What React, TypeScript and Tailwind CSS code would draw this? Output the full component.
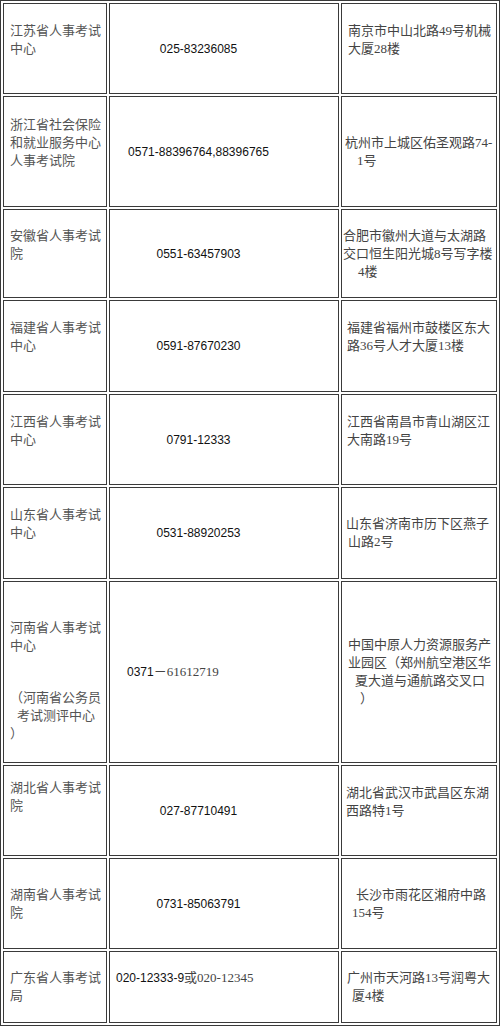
import type { ReactNode } from "react";

type Line = [string, string?];

interface Row {
    h: string;
    org: ReactNode;
    orgPad?: string;
    tel: ReactNode;
    telPad?: string;
    telAlign?: string;
    addr: Line[];
    addrPad?: string;
    addrIndent?: string;
}

const serif = "font-['Liberation_Serif','Noto_Sans_CJK_SC',serif]";
const sans = "font-['Liberation_Sans','Noto_Sans_CJK_SC',sans-serif]";

const OrgLines = ({ lines }: { lines: string[] }) => (
    <>
        {lines.map((l) => (
            <div key={l} className="whitespace-nowrap">{l}</div>
        ))}
    </>
);

const rows: Row[] = [
    {
        h: "h-[91px]",
        org: <OrgLines lines={["江苏省人事考试", "中心"]} />,
        orgPad: "pb-[18px]",
        tel: "025-83236085",
        addr: [["南京市中山北路49号机械"], ["大厦28楼"]],
        addrPad: "pb-[18px]",
        addrIndent: "pl-[6px]",
    },
    {
        h: "h-[111px]",
        org: <OrgLines lines={["浙江省社会保险", "和就业服务中心", "人事考试院"]} />,
        orgPad: "pb-[18px]",
        tel: "0571-88396764,88396765",
        addr: [["杭州市上城区佑圣观路74-"], ["1号", "pl-[12px]"]],
        addrIndent: "pl-[3px]",
    },
    {
        h: "h-[89px]",
        org: <OrgLines lines={["安徽省人事考试", "院"]} />,
        orgPad: "pb-[18px]",
        tel: "0551-63457903",
        addr: [["合肥市徽州大道与太湖路"], ["交口恒生阳光城8号写字楼"], ["4楼", "pl-[15px]"]],
        addrIndent: "pl-[1px]",
    },
    {
        h: "h-[92px]",
        org: <OrgLines lines={["福建省人事考试", "中心"]} />,
        orgPad: "pb-[18px]",
        tel: "0591-87670230",
        addr: [["福建省福州市鼓楼区东大"], ["路36号人才大厦13楼"]],
        addrPad: "pb-[18px]",
        addrIndent: "pl-[5px]",
    },
    {
        h: "h-[91px]",
        org: <OrgLines lines={["江西省人事考试", "中心"]} />,
        orgPad: "pb-[18px]",
        tel: "0791-12333",
        addr: [["江西省南昌市青山湖区江"], ["大南路19号"]],
        addrPad: "pb-[18px]",
        addrIndent: "pl-[5px]",
    },
    {
        h: "h-[92px]",
        org: <OrgLines lines={["山东省人事考试", "中心"]} />,
        orgPad: "pb-[18px]",
        tel: "0531-88920253",
        addr: [["山东省济南市历下区燕子"], ["山路2号", "pl-[2px]"]],
        addrIndent: "pl-[4px]",
    },
    {
        h: "h-[182px]",
        org: (
            <div className="self-stretch pt-[17px]">
                <div>河南省人事考试</div>
                <div>中心</div>
                <div className="mt-[34px] whitespace-nowrap">（河南省公务员</div>
                <div className="pl-[7px] whitespace-nowrap">考试测评中心</div>
                <div>）</div>
            </div>
        ),
        tel: (
            <>
                <span>0371</span>
                <span className={`${serif} text-[13px] text-[#444]`}>－61612719</span>
            </>
        ),
        telAlign: "pl-[17px] text-left",
        addr: [
            ["中国中原人力资源服务产"],
            ["业园区（郑州航空港区华"],
            ["夏大道与通航路交叉口", "pl-[7px]"],
            ["）", "pl-[12px]"],
        ],
        addrIndent: "pl-[6px]",
    },
    {
        h: "h-[91px]",
        org: <OrgLines lines={["湖北省人事考试", "院"]} />,
        orgPad: "pb-[27px]",
        tel: "027-87710491",
        addr: [["湖北省武汉市武昌区东湖"], ["西路特1号"]],
        addrPad: "pb-[18px]",
        addrIndent: "pl-[4px]",
    },
    {
        h: "h-[91px]",
        org: <OrgLines lines={["湖南省人事考试", "院"]} />,
        tel: "0731-85063791",
        addr: [["长沙市雨花区湘府中路", "pl-[8px]"], ["154号", "pl-[4px]"]],
        addrIndent: "pl-[6px]",
    },
    {
        h: "h-[72px]",
        org: <OrgLines lines={["广东省人事考试", "局"]} />,
        tel: (
            <>
                <span>020-12333-9</span>
                <span className={`${serif} text-[13px] text-[#444]`}>或020-12345</span>
            </>
        ),
        telPad: "pb-[18px]",
        telAlign: "pl-[6px] text-left",
        addr: [["广州市天河路13号润粤大"], ["厦4楼", "pl-[5px]"]],
        addrIndent: "pl-[5px]",
    },
];

const cell = "flex flex-col justify-center border border-[#3a3a3a] bg-white";

export default function App() {
    return (
        <div className="w-[500px] bg-white">
            <div className="grid grid-cols-[104px_230px_156px] gap-[2px] border border-[#3a3a3a] p-[2px] bg-white">
                {rows.map((r, idx) => (
                    <div key={idx} className="contents">
                        {/* 机构 */}
                        <div className={`${cell} ${r.h} ${serif} pl-[6px] text-[13px] leading-[18px] text-[#555]`}>
                            <div className={r.orgPad ?? ""}>{r.org}</div>
                        </div>
                        {/* 电话 */}
                        <div className={`${cell} ${r.h} ${sans} text-[12px] leading-[18px] text-[#111]`}>
                            <div className={`whitespace-nowrap ${r.telAlign ?? "pr-[51px] text-center"} ${r.telPad ?? ""}`}>
                                {r.tel}
                            </div>
                        </div>
                        {/* 地址 */}
                        <div className={`${cell} ${r.h} ${serif} ${r.addrIndent ?? "pl-[6px]"} text-[13px] leading-[18px] text-[#444]`}>
                            <div className={r.addrPad ?? ""}>
                                {r.addr.map(([t, cls]) => (
                                    <div key={t} className={`whitespace-nowrap ${cls ?? ""}`}>{t}</div>
                                ))}
                            </div>
                        </div>
                    </div>
                ))}
            </div>
        </div>
    );
}
